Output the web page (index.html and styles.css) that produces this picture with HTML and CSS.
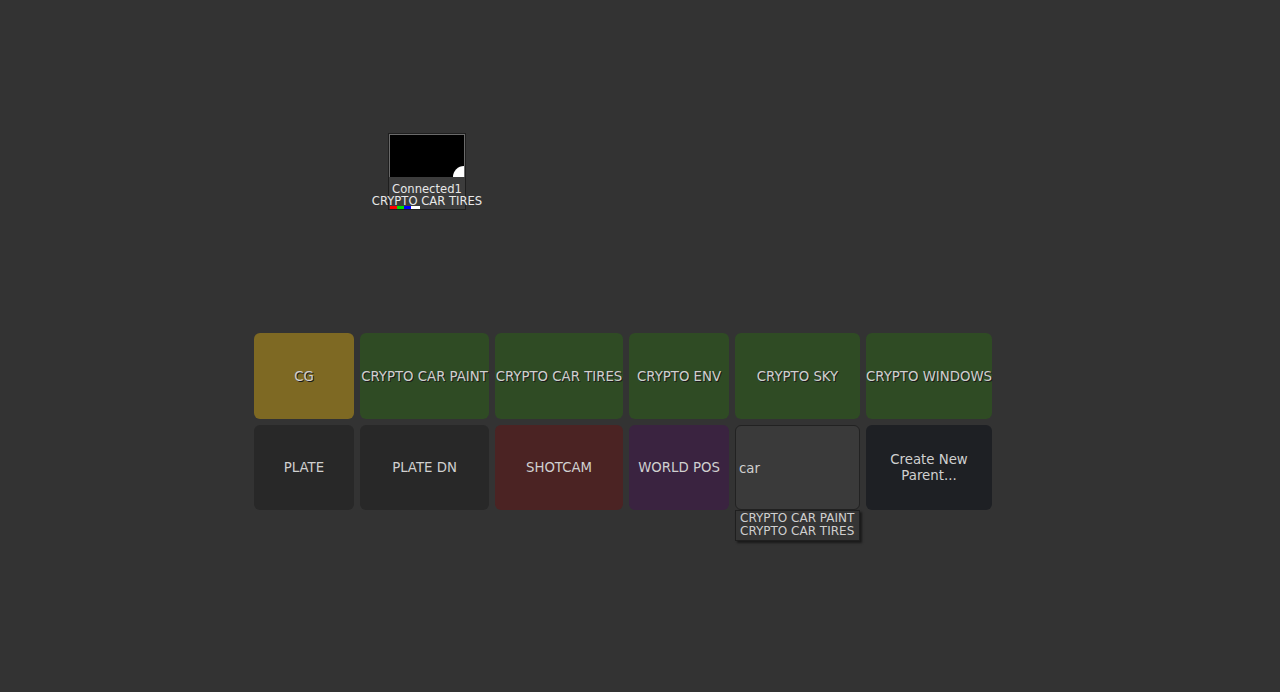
FILE: index.html
```html
<!DOCTYPE html>
<html>
<head>
<meta charset="utf-8">
<link rel="stylesheet" href="styles.css">
</head>
<body>
<div class="canvas">
  <div class="node">
    <div class="thumb"><div class="dot"></div></div>
    <div class="node-label">
      <div class="node-name">Connected1</div>
      <div class="node-sub">CRYPTO CAR TIRES</div>
      <div class="bars"><span class="b r"></span><span class="b g"></span><span class="b bl"></span><span class="b w"></span></div>
    </div>
  </div>

  <div class="panel">
    <div class="tile cg">CG</div>
    <div class="tile green">CRYPTO CAR PAINT</div>
    <div class="tile green">CRYPTO CAR TIRES</div>
    <div class="tile green">CRYPTO ENV</div>
    <div class="tile green">CRYPTO SKY</div>
    <div class="tile green">CRYPTO WINDOWS</div>
    <div class="tile dark">PLATE</div>
    <div class="tile dark">PLATE DN</div>
    <div class="tile red">SHOTCAM</div>
    <div class="tile purple">WORLD POS</div>
    <div class="search">
      <div class="input">car</div>
      <div class="dropdown">
        <div>CRYPTO CAR PAINT</div>
        <div>CRYPTO CAR TIRES</div>
      </div>
    </div>
    <div class="tile create">Create New<br>Parent...</div>
  </div>
</div>
</body>
</html>
```

FILE: styles.css
```css
html, body {
  margin: 0;
  padding: 0;
  background: #333333;
  height: 100%;
}
body {
  font-family: "DejaVu Sans", Verdana, sans-serif;
  color: #cfcfcf;
}
.canvas {
  position: relative;
  width: 1280px;
  height: 692px;
  overflow: hidden;
}
.node {
  position: absolute;
  left: 388px;
  top: 133px;
  width: 76px;
  height: 75px;
  border: 1px solid #1e1e1e;
  background: #3c3c3c;
  display: flex;
  flex-direction: column;
}
.thumb {
  position: relative;
  height: 42px;
  border: 1px solid #6a6a6a;
  border-bottom: none;
  background: #000;
  overflow: hidden;
}
.dot {
  position: absolute;
  right: -11px;
  bottom: -11px;
  width: 22px;
  height: 22px;
  border-radius: 50%;
  background: #fff;
}
.node-label {
  flex: 1;
  display: flex;
  flex-direction: column;
  align-items: center;
  padding-top: 6px;
  font-size: 11.6px;
  line-height: 12px;
  color: #e8e8e8;
}
.node-name, .node-sub {
  white-space: nowrap;
}
.bars {
  display: flex;
  align-self: flex-start;
  margin-left: 1px;
  margin-top: -1px;
}
.b { display: block; height: 3px; width: 7px; }
.b.r { background: #ff0000; }
.b.g { background: #00e000; }
.b.bl { background: #0000ff; }
.b.w { background: #ffffff; width: 9px; }

.panel {
  position: absolute;
  left: 254px;
  top: 333px;
  display: grid;
  grid-template-columns: 100px 129px 128px 100px 125px 126px;
  grid-template-rows: 86px 85px;
  gap: 6px;
}
.tile {
  border-radius: 6px;
  display: flex;
  align-items: center;
  justify-content: center;
  text-align: center;
  font-size: 13.3px;
  line-height: 16px;
  color: #d0d0d0;
  text-shadow: 1px 1px 0 #1a1a1a;
  white-space: nowrap;
  padding-top: 1px;
}
.cg { background: #7e6923; }
.green { background: #2f4b24; }
.dark { background: #282828; text-shadow: none; }
.red { background: #4b2323; text-shadow: none; }
.purple { background: #3a2340; text-shadow: none; }
.create { background: #1e2024; text-shadow: none; }
.search {
  position: relative;
}
.input {
  box-sizing: border-box;
  height: 100%;
  border: 1px solid #222;
  border-radius: 6px;
  background: #3a3a3a;
  display: flex;
  align-items: center;
  padding-left: 3px;
  padding-top: 1px;
  font-size: 13.3px;
  color: #d0d0d0;
}
.dropdown {
  position: absolute;
  left: 0;
  top: 100%;
  box-sizing: border-box;
  width: 125px;
  padding: 1px 4px 2px 4px;
  background: #353535;
  border: 1px solid #1f1f1f;
  box-shadow: 2px 2px 2px rgba(0,0,0,0.5);
  font-size: 12px;
  line-height: 13px;
  color: #cfcfcf;
  white-space: nowrap;
}
```
